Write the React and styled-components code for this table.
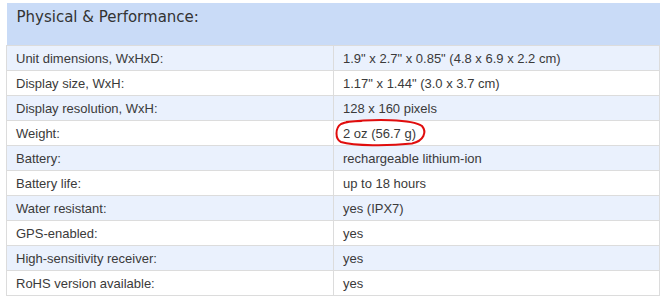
import React from 'react';
import styled, { createGlobalStyle } from 'styled-components';

const Global = createGlobalStyle`
  body {
    margin: 0;
    background: #fff;
  }
`;

const Wrap = styled.div`
  padding: 3px 0 0 6px;
`;

const Table = styled.table`
  width: 654px;
  border-collapse: collapse;
  font-family: 'Liberation Sans', Arial, sans-serif;
  font-size: 13px;
  color: #3a3a3a;
`;

const Head = styled.th`
  background: #c9dbf7;
  height: 37px;
  padding: 5px 10px 0;
  text-align: left;
  vertical-align: top;
  font-family: 'DejaVu Sans', Tahoma, sans-serif;
  font-weight: normal;
  font-size: 15px;
  color: #333;
  border-bottom: 1px solid #dcdcdc;
`;

const Row = styled.tr`
  background: ${(p) => (p.$odd ? '#eaf1fd' : '#fff')};
`;

const Cell = styled.td`
  height: 24px;
  padding: 0 0 0 9px;
  border: 1px solid #dcdcdc;
  vertical-align: middle;
  width: ${(p) => (p.$label ? '317px' : 'auto')};
  position: relative;
`;

const Circle = styled.svg`
  position: absolute;
  left: 0;
  top: -2px;
  overflow: visible;
`;

const rows = [
  ['Unit dimensions, WxHxD:', '1.9" x 2.7" x 0.85" (4.8 x 6.9 x 2.2 cm)'],
  ['Display size, WxH:', '1.17" x 1.44" (3.0 x 3.7 cm)'],
  ['Display resolution, WxH:', '128 x 160 pixels'],
  ['Weight:', '2 oz (56.7 g)', true],
  ['Battery:', 'rechargeable lithium-ion'],
  ['Battery life:', 'up to 18 hours'],
  ['Water resistant:', 'yes (IPX7)'],
  ['GPS-enabled:', 'yes'],
  ['High-sensitivity receiver:', 'yes'],
  ['RoHS version available:', 'yes'],
];

export default function App() {
  return (
    <Wrap>
      <Global />
      <Table>
        <thead>
          <tr>
            <Head colSpan={2}>Physical &amp; Performance:</Head>
          </tr>
        </thead>
        <tbody>
          {rows.map(([label, value, marked], i) => (
            <Row key={label} $odd={i % 2 === 0}>
              <Cell $label>{label}</Cell>
              <Cell>
                {marked && (
                  <Circle width="92" height="27" viewBox="0 0 92 27">
                    <path
                      d="M12 3 C40 0 78 0 88 7 C93 13 90 22 78 24.5 C55 27 20 27 7 23 C1 20 1 9 7 5 C13 2 22 2 28 2"
                      fill="none"
                      stroke="#e00d0d"
                      strokeWidth="2"
                    />
                  </Circle>
                )}
                {value}
              </Cell>
            </Row>
          ))}
        </tbody>
      </Table>
    </Wrap>
  );
}
